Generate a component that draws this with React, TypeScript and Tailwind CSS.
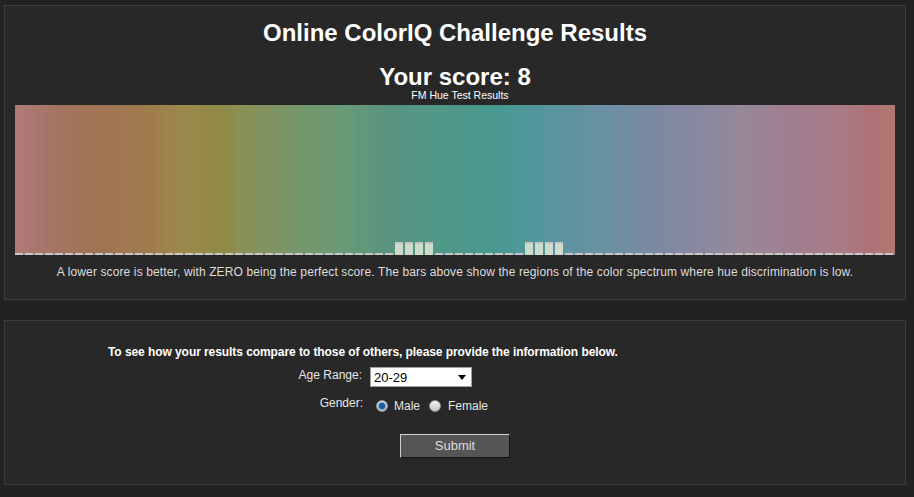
import React from 'react';

// colour stops sampled along the spectrum (x in page px -> hex)
const stops: [number, string][] = [
  [15, '#b07a78'],
  [40, '#a8766c'],
  [60, '#a27460'],
  [100, '#a07454'],
  [150, '#a07c4c'],
  [185, '#9a8a4c'],
  [225, '#8e8a48'],
  [245, '#8a9058'],
  [290, '#78966a'],
  [340, '#6a9a76'],
  [385, '#5a9480'],
  [440, '#509888'],
  [495, '#489890'],
  [525, '#50989a'],
  [560, '#5c94a0'],
  [610, '#6c90a4'],
  [660, '#7e88a0'],
  [700, '#8a88a0'],
  [740, '#968898'],
  [790, '#a07e90'],
  [840, '#a87a84'],
  [870, '#b07278'],
  [895, '#b07870']
];

const hexToRgb = (h: string) => [
  parseInt(h.slice(1, 3), 16),
  parseInt(h.slice(3, 5), 16),
  parseInt(h.slice(5, 7), 16)
];

const colorAt = (x: number) => {
  for (let i = 0; i < stops.length - 1; i++) {
    const [x0, c0] = stops[i];
    const [x1, c1] = stops[i + 1];
    if (x >= x0 && x <= x1) {
      const t = (x - x0) / (x1 - x0);
      const a = hexToRgb(c0);
      const b = hexToRgb(c1);
      const rgb = a.map((v, k) => Math.round(v + (b[k] - v) * t));
      return `rgb(${rgb[0]}, ${rgb[1]}, ${rgb[2]})`;
    }
  }
  return stops[stops.length - 1][1];
};

const highBars = [38, 39, 40, 41, 51, 52, 53, 54];

const Spectrum = () => {
  const columns = Array.from({ length: 88 }, (_, i) => i);
  return (
    <div className="flex w-[880px] h-[150px] mt-[3px]">
      {columns.map((i) => (
        <div
          key={i}
          className="flex-1 flex flex-col justify-end"
          style={{ background: colorAt(15 + 10 * i + 5) }}
        >
          {highBars.includes(i) ? (
            <div className="w-[8px] h-[13px] border-t-2 border-[#c6c6c6] bg-[#cddccb]" />
          ) : (
            <div className="w-[8px] h-[2px] bg-[#c8c8c8]" />
          )}
        </div>
      ))}
    </div>
  );
};

const Radio = ({ checked }: { checked: boolean }) => (
  <span className="w-[12px] h-[12px] rounded-full border border-[#8e8e8e] bg-gradient-to-b from-[#f6f6f6] to-[#c4c4c4] flex items-center justify-center">
    {checked && <span className="w-[6px] h-[6px] rounded-full bg-[#1d5f95] ring-1 ring-[#6aa6d6]" />}
  </span>
);

export default function App() {
  return (
    <div
      className="min-h-screen bg-[#222222] pt-[5px] pb-[11px]"
      style={{ fontFamily: '"Liberation Sans", Arial, sans-serif' }}
    >
      <div className="ml-[4px] w-[902px] border border-[#3c3c3c] bg-[#282828] px-[10px] pt-[13px] pb-[19px] flex flex-col items-center">
        <h1 className="text-[24px] leading-[28px] font-bold text-white">Online ColorIQ Challenge Results</h1>
        <p className="mt-[18px] text-[24px] leading-[24px] font-bold text-white">Your score: 8</p>
        <p className="ml-[10px] text-[10.5px] leading-[13px] text-white">FM Hue Test Results</p>
        <Spectrum />
        <p className="mt-[10px] text-[12px] leading-[15px] tracking-[0.12px] text-[#dddddd]">
          A lower score is better, with ZERO being the perfect score. The bars above show the regions of the color spectrum where hue discrimination is low.
        </p>
      </div>

      <div className="ml-[4px] mt-[20px] w-[902px] border border-[#3c3c3c] bg-[#282828] pt-[24px] pb-[26px]">
        <p className="pl-[103px] text-[12px] leading-[14px] font-bold tracking-[-0.07px] text-white">
          To see how your results compare to those of others, please provide the information below.
        </p>

        <div className="mt-[8px] flex items-start h-[20px]">
          <span className="w-[357px] pt-[1px] text-right text-[12px] leading-[14px] text-[#e6e6e6]">Age Range:</span>
          <div className="ml-[8px] w-[102px] h-[20px] bg-white border border-[#a0a0a0] flex items-center justify-between pl-[3px] pr-[5px]">
            <span className="text-[13px] leading-[15px] text-black">20-29</span>
            <svg width="8" height="5" viewBox="0 0 8 5">
              <polygon points="0,0 8,0 4,5" fill="#000" />
            </svg>
          </div>
        </div>

        <div className="mt-[9px] flex items-start">
          <span className="w-[358px] text-right text-[12px] leading-[14px] text-[#e6e6e6]">Gender:</span>
          <div className="ml-[13px] pt-[3px] flex items-center text-[12px] leading-[14px] text-[#e6e6e6]">
            <Radio checked />
            <span className="ml-[6px]">Male</span>
            <span className="ml-[9px]">
              <Radio checked={false} />
            </span>
            <span className="ml-[7px]">Female</span>
          </div>
        </div>

        <div className="mt-[21px] flex justify-center">
          <button className="w-[110px] h-[24px] bg-[#555555] border border-t-[#d0d0d0] border-l-[#d0d0d0] border-r-[#111111] border-b-[#111111] text-[13px] text-[#dddddd]">
            Submit
          </button>
        </div>
      </div>
    </div>
  );
}
